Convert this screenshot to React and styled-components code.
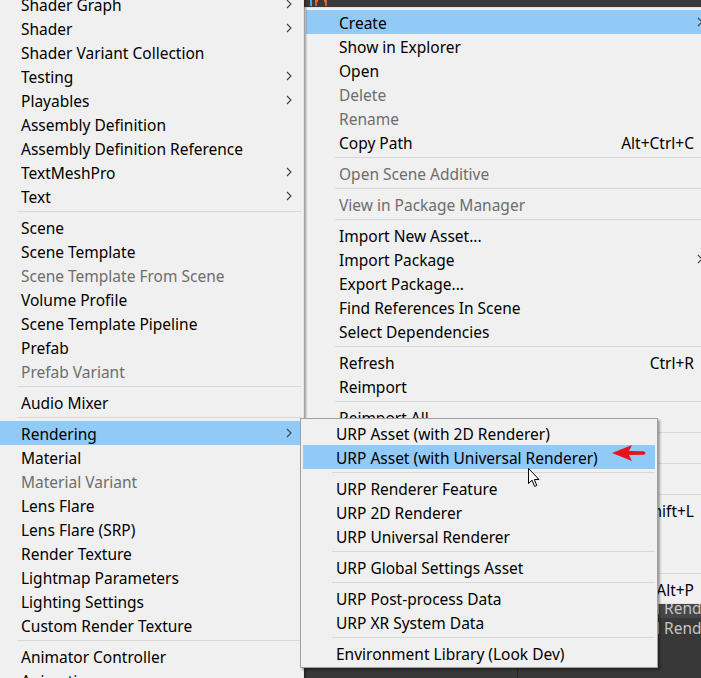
import styled, { createGlobalStyle } from "styled-components";

const GlobalStyle = createGlobalStyle`
  html, body {
    margin: 0;
    padding: 0;
    background: #383838;
  }
  body {
    font-family: "Noto Sans", "Noto Sans CJK SC", sans-serif;
  }
`;

const createItems = [
  { label: "Shader Graph", sub: true },
  { label: "Shader", sub: true },
  { label: "Shader Variant Collection" },
  { label: "Testing", sub: true },
  { label: "Playables", sub: true },
  { label: "Assembly Definition" },
  { label: "Assembly Definition Reference" },
  { label: "TextMeshPro", sub: true },
  { label: "Text", sub: true },
  "-",
  { label: "Scene" },
  { label: "Scene Template" },
  { label: "Scene Template From Scene", disabled: true },
  { label: "Volume Profile" },
  { label: "Scene Template Pipeline" },
  { label: "Prefab" },
  { label: "Prefab Variant", disabled: true },
  "-",
  { label: "Audio Mixer" },
  "-",
  { label: "Rendering", sub: true, active: true },
  { label: "Material" },
  { label: "Material Variant", disabled: true },
  { label: "Lens Flare" },
  { label: "Lens Flare (SRP)" },
  { label: "Render Texture" },
  { label: "Lightmap Parameters" },
  { label: "Lighting Settings" },
  { label: "Custom Render Texture" },
  "-",
  { label: "Animator Controller" },
  { label: "Animation" },
];

// rows below "Reimport All" sit under the Rendering submenu, only their shortcuts peek out
const contextItems = [
  { label: "Create", sub: true, active: true },
  { label: "Show in Explorer" },
  { label: "Open" },
  { label: "Delete", disabled: true },
  { label: "Rename", disabled: true },
  { label: "Copy Path", shortcut: "Alt+Ctrl+C" },
  "-",
  { label: "Open Scene Additive", disabled: true },
  "-",
  { label: "View in Package Manager", disabled: true },
  "-",
  { label: "Import New Asset..." },
  { label: "Import Package", sub: true },
  { label: "Export Package..." },
  { label: "Find References In Scene" },
  { label: "Select Dependencies" },
  "-",
  { label: "Refresh", shortcut: "Ctrl+R" },
  { label: "Reimport" },
  "-",
  { label: "Reimport All" },
  "-",
  { label: "" },
  "-",
  { label: "" },
  "-",
  { label: "", shortcut: "Alt+Shift+L" },
  { label: "" },
  { label: "" },
  "-",
  { label: "", shortcut: "Alt+P" },
];

const renderingItems = [
  { label: "URP Asset (with 2D Renderer)" },
  { label: "URP Asset (with Universal Renderer)", active: true },
  "-",
  { label: "URP Renderer Feature" },
  { label: "URP 2D Renderer" },
  { label: "URP Universal Renderer" },
  "-",
  { label: "URP Global Settings Asset" },
  "-",
  { label: "URP Post-process Data" },
  { label: "URP XR System Data" },
  "-",
  { label: "Environment Library (Look Dev)" },
];

function Chevron() {
  return (
    <svg width="6" height="10" viewBox="0 0 6 10">
      <polyline points="1,1 5,5 1,9" fill="none" stroke="#404040" strokeWidth="1.1" />
    </svg>
  );
}

function MenuList({ items }) {
  return items.map((item, i) =>
    item === "-" ? (
      <Separator key={i} />
    ) : (
      <Item key={i} $active={item.active} $disabled={item.disabled}>
        <Label>{item.label}</Label>
        <Shortcut>{item.shortcut}</Shortcut>
        <ArrowCell>{item.sub && <Chevron />}</ArrowCell>
      </Item>
    )
  );
}

export default function App() {
  return (
    <>
      <GlobalStyle />
      <Screen>
        <TopStrip>
          <svg width="24" height="8" viewBox="0 0 24 8">
            <rect x="4" y="0" width="2" height="6" fill="#4aa3ff" />
            <path d="M12 0 h-2 v6 M10 1 h2 M18 0 h2 v6 M20 1 h-2" stroke="#ff6a3d" strokeWidth="1.6" fill="none" />
          </svg>
        </TopStrip>

        <AssetList>
          <AssetRow $selected>Universal Render Pipeline Asset</AssetRow>
          <AssetRow>Universal Render Pipeline Asset_Renderer</AssetRow>
        </AssetList>
        <PanelDivider />

        <Menu $left={303} $top={7} $width={412}>
          <MenuList items={contextItems} />
        </Menu>

        <Menu $left={-15} $top={-11} $width={319} $shadow>
          <MenuList items={createItems} />
        </Menu>

        <Menu $left={300} $top={418} $width={358} $shadow $framed>
          <MenuList items={renderingItems} />
        </Menu>

        <Pointer>
          <svg width="36" height="18" viewBox="0 0 36 18">
            <path d="M1 9 L21 1 L18 7 L33 7.2 Q36 9 33 10.8 L18 11 L21 17 Z" fill="#e8141c" />
          </svg>
        </Pointer>

        <Cursor>
          <svg width="13" height="20" viewBox="0 0 13 20">
            <path
              d="M0.5 0.5 L0.5 15.5 L4 12.2 L6.6 18.4 L8.8 17.5 L6.3 11.5 L11 11.5 Z"
              fill="#fff"
              stroke="#000"
              strokeWidth="1"
              strokeLinejoin="round"
            />
          </svg>
        </Cursor>
      </Screen>
    </>
  );
}

const Screen = styled.div`
  position: relative;
  width: 701px;
  height: 678px;
  overflow: hidden;
  background: #383838;
`;

const TopStrip = styled.div`
  display: flex;
  align-items: flex-start;
  height: 7px;
  padding-left: 306px;
  background: #3a3a3a;
  overflow: hidden;
`;

const AssetList = styled.div`
  position: absolute;
  left: 556px;
  top: 601px;
  width: 160px;
  display: flex;
  flex-direction: column;
`;

const AssetRow = styled.div`
  height: ${(p) => (p.$selected ? 17 : 20)}px;
  line-height: ${(p) => (p.$selected ? 15 : 20)}px;
  padding-left: 36px;
  font-size: 15.5px;
  color: #c4c4c4;
  white-space: nowrap;
  background: ${(p) => (p.$selected ? "#464646" : "transparent")};
`;

const PanelDivider = styled.div`
  position: absolute;
  left: 517px;
  top: 600px;
  width: 1px;
  height: 78px;
  background: #262626;
`;

const Menu = styled.div`
  position: absolute;
  left: ${(p) => p.$left}px;
  top: ${(p) => p.$top}px;
  width: ${(p) => p.$width}px;
  box-sizing: border-box;
  display: flex;
  flex-direction: column;
  padding: 2px;
  background: #f0f0f0;
  border: 1px solid ${(p) => (p.$framed ? "#a0a0a0" : "#e4e4e4")};
  box-shadow: ${(p) => (p.$shadow ? "2px 2px 2px rgba(0, 0, 0, 0.35)" : "none")};
`;

const Item = styled.div`
  display: grid;
  grid-template-columns: 1fr auto 18px;
  align-items: center;
  box-sizing: border-box;
  height: 24px;
  padding: 2px 0 0 33px;
  font-size: 15.5px;
  white-space: nowrap;
  color: ${(p) => (p.$disabled ? "#6d6d6d" : "#000")};
  background: ${(p) => (p.$active ? "#91c9f7" : "transparent")};
`;

const Label = styled.span`
  overflow: hidden;
`;

const Shortcut = styled.span`
  text-align: right;
`;

const ArrowCell = styled.span`
  display: flex;
  align-items: center;
  padding-left: 3px;
  margin-top: -2px;
`;

const Separator = styled.div`
  display: flex;
  align-items: center;
  height: 7px;
  margin-left: 29px;

  &::after {
    content: "";
    flex: 1;
    height: 1px;
    background: #d7d7d7;
  }
`;

const Pointer = styled.div`
  position: absolute;
  left: 611px;
  top: 444px;
  line-height: 0;
`;

const Cursor = styled.div`
  position: absolute;
  left: 528px;
  top: 468px;
  line-height: 0;
`;
